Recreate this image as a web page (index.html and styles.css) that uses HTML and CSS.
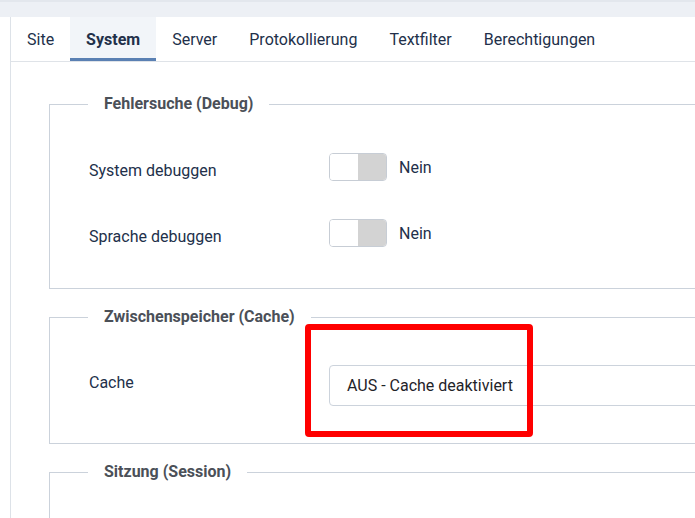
FILE: index.html
```html
<!DOCTYPE html>
<html lang="de">
<head>
<meta charset="utf-8">
<title>Konfiguration – System</title>
<link rel="stylesheet" href="styles.css">
</head>
<body>
<div class="topbar"></div>
<div class="card">
  <nav class="tabs">
    <a class="tab">Site</a>
    <a class="tab active">System</a>
    <a class="tab">Server</a>
    <a class="tab">Protokollierung</a>
    <a class="tab">Textfilter</a>
    <a class="tab">Berechtigungen</a>
  </nav>
  <div class="content">
    <fieldset class="group">
      <legend>Fehlersuche (Debug)</legend>
      <div class="rows">
        <div class="row">
          <span class="label low">System debuggen</span>
          <span class="switch"><span class="on"></span><span class="off"></span></span>
          <span class="value">Nein</span>
        </div>
        <div class="row">
          <span class="label low">Sprache debuggen</span>
          <span class="switch"><span class="on"></span><span class="off"></span></span>
          <span class="value">Nein</span>
        </div>
      </div>
    </fieldset>
    <fieldset class="group">
      <legend>Zwischenspeicher (Cache)</legend>
      <div class="rows cache">
        <div class="row">
          <span class="label high">Cache</span>
          <div class="select-wrap">
            <div class="select">AUS - Cache deaktiviert</div>
            <div class="highlight"></div>
          </div>
        </div>
      </div>
    </fieldset>
    <fieldset class="group">
      <legend>Sitzung (Session)</legend>
      <div class="rows session"></div>
    </fieldset>
  </div>
</div>
</body>
</html>
```
FILE: styles.css
```css
html, body {
  margin: 0;
  padding: 0;
  overflow: hidden;
  background: #ffffff;
  font-family: Roboto, "Liberation Sans", sans-serif;
  font-size: 16px;
  color: #22304a;
}

.topbar {
  height: 15px;
  background: #edf0f5;
  border-top: 2px solid #e3e7ed;
}

.card {
  margin-left: 10px;
  width: 1100px;
  border-left: 1px solid #dde2e8;
  background: #ffffff;
  height: 501px;
  overflow: hidden;
}

.tabs {
  display: flex;
  border-bottom: 1px solid #dfe3e8;
}

.tab {
  display: flex;
  align-items: center;
  height: 44px;
  padding: 0 16px;
  box-sizing: border-box;
  color: #22304a;
  text-decoration: none;
}

.tab.active {
  background: #f2f5f9;
  font-weight: 700;
  box-shadow: inset 0 -3px 0 #5a80b3;
}

.content {
  padding: 31px 0 0 38px;
}

.group {
  margin: 0 0 17px 0;
  padding: 0;
  border: 1px solid #cbd2db;
  min-width: 0;
}

.group legend {
  margin-left: 38px;
  padding: 0 16px;
  font-weight: 700;
  line-height: 22px;
  color: #4b5058;
}

.rows {
  display: flex;
  flex-direction: column;
  gap: 38px;
  padding: 38px 0 41px 39px;
}

.rows.cache {
  padding: 37px 0 37px 39px;
}

.rows.session {
  height: 60px;
}

.row {
  display: flex;
  align-items: center;
}

.label {
  width: 240px;
  flex-shrink: 0;
  position: relative;
}

.label.low {
  top: 3px;
}

.label.high {
  top: -3px;
}

.switch {
  display: flex;
  width: 58px;
  height: 28px;
  box-sizing: border-box;
  border: 1px solid #c7cdd5;
  border-radius: 4px;
  overflow: hidden;
}

.switch .on {
  flex: 1;
  background: #ffffff;
}

.switch .off {
  flex: 1;
  background: #d3d3d3;
}

.value {
  margin-left: 12px;
}

.select-wrap {
  position: relative;
  flex: 1;
}

.select {
  height: 41px;
  box-sizing: border-box;
  border: 1px solid #ccd3dc;
  border-radius: 4px;
  padding: 0 17px;
  display: flex;
  align-items: center;
  color: #1f2329;
}

.highlight {
  position: absolute;
  left: -24px;
  top: -41px;
  width: 228px;
  height: 113px;
  box-sizing: border-box;
  border: 6px solid #ff0000;
  border-radius: 4px;
}
```
